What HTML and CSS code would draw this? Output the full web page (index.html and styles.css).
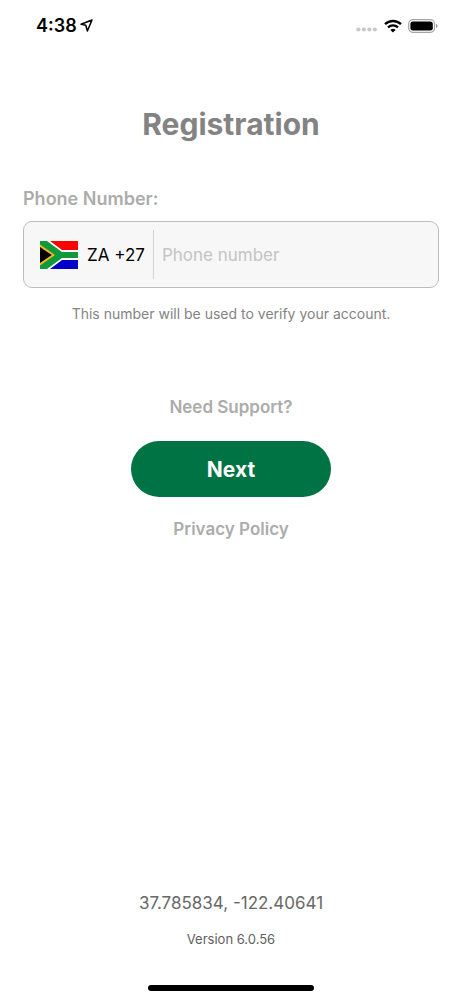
FILE: index.html
```html
<!DOCTYPE html>
<html lang="en">
<head>
<meta charset="utf-8">
<meta name="viewport" content="width=device-width, initial-scale=1">
<title>Registration</title>
<link rel="stylesheet" href="styles.css">
</head>
<body>
<div class="screen">
  <header class="status">
    <div class="status-time">
      <span>4:38</span>
      <svg width="13" height="13" viewBox="0 0 13 13" fill="none" stroke="#000" stroke-width="1.5" stroke-linejoin="round" aria-hidden="true"><path d="M12 1 1 5.300 5.800 6.300 7.400 12z"/></svg>
    </div>
    <div class="status-icons">
      <svg class="signal" width="22" height="5" viewBox="0 0 22 5" fill="#c8c8c8" aria-hidden="true"><circle cx="2.4" cy="2.5" r="2.1"/><circle cx="7.9" cy="2.5" r="2.1"/><circle cx="13.4" cy="2.5" r="2.1"/><circle cx="18.9" cy="2.5" r="2.1"/></svg>
      <svg width="18" height="14" viewBox="0 0 18 14" fill="none" stroke="#000" stroke-width="2.3" aria-hidden="true"><path d="M1 5.2C5.5.9 12.500.9 17 5.200"/><path d="M4 8.300C6.800 5.700 11.200 5.700 14 8.300"/><path d="M9 13.500 6.400 10.900Q9 8.800 11.600 10.900z" fill="#000" stroke="none"/></svg>
      <svg width="30" height="14" viewBox="0 0 30 14" aria-hidden="true"><rect x=".7" y=".7" width="25.800" height="12.600" rx="4" fill="#fff" stroke="#a5a5a5" stroke-width="1.200"/><rect x="2.400" y="2.400" width="22.400" height="9.200" rx="2.400"/><path d="M28 4.800Q29.600 5.400 29.600 7T28 9.200z" fill="#999"/></svg>
    </div>
  </header>
  <main class="content">
    <h1 class="title">Registration</h1>
    <form class="form">
      <label class="label" for="phone">Phone Number:</label>
      <div class="field">
        <button class="country" type="button" aria-label="Country code ZA +27">
          <svg width="38" height="28" viewBox="0 0 38 28" aria-hidden="true">
            <path fill="#fff" d="M0 0h38v28H0z"/>
            <path fill="#f00" d="M10 0h28v9H22z"/>
            <path fill="#0000c8" d="M10 28h28v-9H22z"/>
            <path fill="#109a3c" d="M0 0h7l15 11h16v6H22L7 28H0z"/>
            <path fill="#f8b820" d="M0 3.500 15 14 0 24.500z"/>
            <path fill="#000" d="M0 6 11.800 14 0 22z"/>
          </svg>
          <span>ZA +27</span>
        </button>
        <input class="phone" id="phone" type="tel" placeholder="Phone number">
      </div>
      <p class="hint">This number will be used to verify your account.</p>
      <a class="link" href="#support">Need Support?</a>
      <button class="next" type="submit">Next</button>
      <a class="link" href="#privacy">Privacy Policy</a>
    </form>
  </main>
  <footer class="footer">
    <p class="coords">37.785834, -122.40641</p>
    <p class="version">Version 6.0.56</p>
    <div class="home-bar"></div>
  </footer>
</div>
</body>
</html>
```
FILE: styles.css
```css
* { box-sizing: border-box; }
body {
  margin: 0;
  background: #fff;
  font-family: Inter, "Liberation Sans", sans-serif;
}
h1, p { margin: 0; }
button, input { font: inherit; border: 0; padding: 0; }
.screen {
  min-height: 100vh;
  display: flex;
  flex-direction: column;
}
.status {
  height: 51px;
  padding: 0 24px 0 36px;
  display: flex;
  align-items: center;
  justify-content: space-between;
}
.status-time {
  display: flex;
  align-items: center;
  gap: 3px;
  font-size: 18px;
  font-weight: 600;
}
.status-icons {
  display: flex;
  align-items: center;
  gap: 6px;
}
.signal { margin-top: 8px; }
.content {
  flex: 1;
  padding: 53px 23px 0;
}
.title {
  font-size: 30px;
  line-height: 40px;
  font-weight: 700;
  color: #838383;
  text-align: center;
}
.form {
  margin-top: 43px;
  display: flex;
  flex-direction: column;
  align-items: center;
}
.label {
  align-self: stretch;
  font-size: 18px;
  line-height: 24px;
  font-weight: 600;
  color: #acacac;
}
.field {
  align-self: stretch;
  height: 67px;
  margin-top: 10px;
  padding: 8px 16px;
  display: flex;
  border: 1px solid #bdbdbd;
  border-radius: 9px;
  background: #f7f7f7;
}
.country {
  display: flex;
  align-items: center;
  gap: 9px;
  padding-right: 8px;
  border-right: 1px solid #d0d0d0;
  background: none;
  color: #000;
  font-size: 17px;
}
.phone {
  flex: 1;
  min-width: 0;
  padding-left: 8px;
  background: none;
  font-size: 17px;
}
.phone::placeholder { color: #c4c4c4; opacity: 1; }
.hint {
  margin-top: 16px;
  font-size: 14px;
  line-height: 20px;
  color: #838383;
}
.link {
  font-size: 17px;
  line-height: 24px;
  font-weight: 600;
  color: #acacac;
  text-decoration: none;
}
.hint + .link { margin-top: 71px; }
.next {
  width: 200px;
  height: 56px;
  margin: 22px 0 20px;
  border-radius: 28px;
  background: #007345;
  color: #fff;
  font-size: 21px;
  font-weight: 700;
}
.footer {
  display: flex;
  flex-direction: column;
  align-items: center;
  padding-bottom: 9px;
}
.coords {
  font-size: 17px;
  line-height: 24px;
  color: #686868;
}
.version {
  margin-top: 14px;
  font-size: 13px;
  line-height: 20px;
  color: #606060;
}
.home-bar {
  width: 166px;
  height: 6px;
  margin-top: 36px;
  border-radius: 3px;
  background: #000;
}
```
